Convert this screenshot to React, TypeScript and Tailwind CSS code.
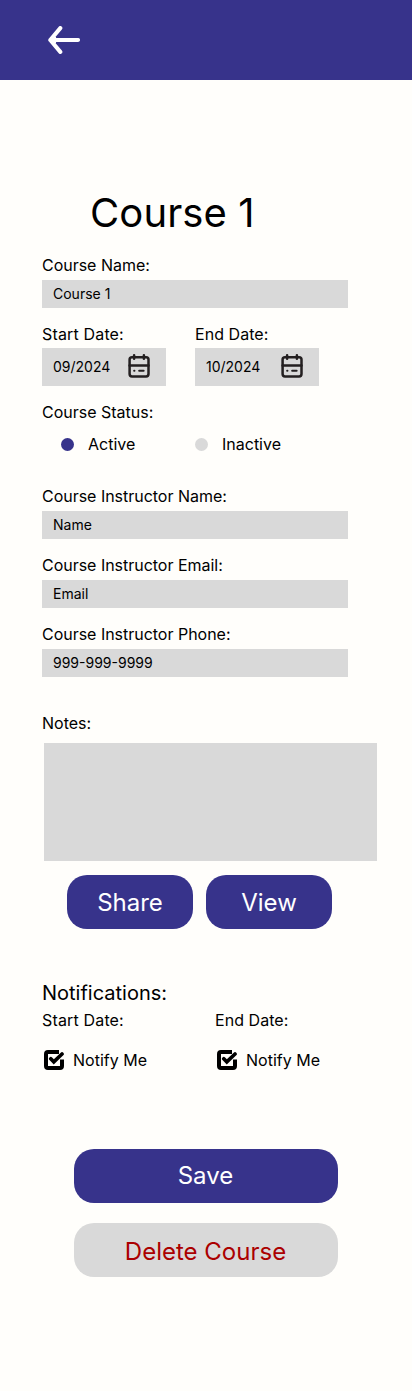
import React from "react";

function BackArrow() {
  return (
    <svg width="32" height="28" viewBox="0 0 32 28" fill="none" stroke="#fff" strokeWidth="4.1" strokeLinecap="round" strokeLinejoin="round">
      <path d="M30 14H2.3M12.3 2.1L2.3 14L12.3 25.9M6 12L4 14L6 16" />
    </svg>
  );
}

function CalendarIcon() {
  return (
    <svg className="-mt-[3px]" width="22" height="25" viewBox="0 0 22 25" fill="none" stroke="#231f20" strokeWidth="2.5" strokeLinecap="round">
      <rect x="1.6" y="4.2" width="18.9" height="19.2" rx="2.4" />
      <path d="M1.6 12.4H20.5M6.1 2.2V5.8M15.9 2.2V5.8" />
      <path d="M6.2 17.7H6.4M11.2 17.7H15.6" strokeWidth="2.1" />
    </svg>
  );
}

function CheckIcon() {
  return (
    <svg width="20" height="20" viewBox="0 0 20 20" fill="none" stroke="#000">
      <path d="M15 2H4Q2 2 2 4V16Q2 18 4 18H16Q18 18 18 16V9.5" strokeWidth="4" />
      <path d="M6.8 8.8L9.8 11.8L18 4" strokeWidth="3.7" strokeLinecap="round" />
    </svg>
  );
}

function Label({ children, className = "" }: { children: React.ReactNode; className?: string }) {
  return <div className={`h-5 text-base leading-5 whitespace-nowrap ${className}`}>{children}</div>;
}

function Field({ label, value }: { label: string; value: string }) {
  return (
    <div className="flex flex-col gap-[5px]">
      <Label className="tracking-[-0.02px]">{label}</Label>
      <div className="flex h-7 w-[306px] items-center bg-[#d9d9d9] pl-[11px] text-sm">{value}</div>
    </div>
  );
}

function DateField({ label, value, className }: { label: string; value: string; className?: string }) {
  return (
    <div className="flex w-[124px] flex-col gap-1">
      <Label className={className}>{label}</Label>
      <div className="flex h-[38px] items-center justify-between bg-[#d9d9d9] pr-4 pl-[11px] text-sm">
        {value}
        <CalendarIcon />
      </div>
    </div>
  );
}

function Notify({ label, className }: { label: string; className?: string }) {
  return (
    <div className="flex w-[173px] flex-col gap-5">
      <Label className={className}>{label}</Label>
      <div className="flex items-center gap-[9px] pl-0.5">
        <CheckIcon />
        <Label>Notify Me</Label>
      </div>
    </div>
  );
}

export default function App() {
  return (
    <div className="h-[1391px] w-[412px] bg-[#fffefb] font-['Inter',sans-serif] text-black">
      <header className="flex h-20 items-center bg-[#37338b] pl-12">
        <BackArrow />
      </header>
      <main className="flex flex-col pl-[42px]">
        <h1 className="mt-[109px] pl-12 text-[40px] leading-12 tracking-[0.1px]">Course 1</h1>
        <div className="mt-[18px]">
          <Field label="Course Name:" value="Course 1" />
        </div>
        <div className="mt-4 flex gap-[29px]">
          <DateField label="Start Date:" value="09/2024" className="tracking-[0.16px]" />
          <DateField label="End Date:" value="10/2024" className="tracking-[0.05px]" />
        </div>
        <div className="mt-4">
          <Label>Course Status:</Label>
        </div>
        <div className="mt-3 flex pl-[19px]">
          <div className="flex w-[134px] items-center gap-3.5">
            <span className="size-[13px] rounded-full bg-[#37338b]" />
            <Label>Active</Label>
          </div>
          <div className="flex items-center gap-3.5">
            <span className="size-[13px] rounded-full bg-[#d9d9d9]" />
            <Label>Inactive</Label>
          </div>
        </div>
        <div className="mt-8 flex flex-col gap-4">
          <Field label="Course Instructor Name:" value="Name" />
          <Field label="Course Instructor Email:" value="Email" />
          <Field label="Course Instructor Phone:" value="999-999-9999" />
        </div>
        <div className="mt-9">
          <Label>Notes:</Label>
        </div>
        <div className="mt-2.5 ml-0.5 h-[118px] w-[333px] bg-[#d9d9d9]" />
        <div className="mt-3.5 flex gap-[13px] pl-[25px] text-2xl text-white">
          <button className="h-[54px] w-[126px] rounded-[20px] bg-[#37338b] pt-0.5">Share</button>
          <button className="h-[54px] w-[126px] rounded-[20px] bg-[#37338b] pt-0.5">View</button>
        </div>
        <h2 className="mt-[52px] text-xl leading-6">Notifications:</h2>
        <div className="mt-[5px] flex">
          <Notify label="Start Date:" className="tracking-[0.16px]" />
          <Notify label="End Date:" className="tracking-[0.05px]" />
        </div>
        <div className="mt-[79px] flex flex-col gap-5 pl-8 text-2xl">
          <button className="h-[54px] w-[264px] rounded-[20px] bg-[#37338b] pr-px text-white">Save</button>
          <button className="h-[54px] w-[264px] rounded-[20px] bg-[#d9d9d9] pt-1 pr-px text-[#ab0000]">Delete Course</button>
        </div>
      </main>
    </div>
  );
}
